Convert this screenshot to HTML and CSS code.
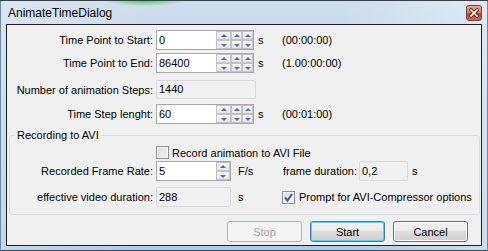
FILE: index.html
```html
<!DOCTYPE html>
<html lang="en">

<head>
    <meta charset="UTF-8">
    <title>AnimateTimeDialog</title>
    <link rel="stylesheet" href="styles.css">
</head>

<body>
    <div class="window">
        <div class="titlebar">
            <span class="title">AnimateTimeDialog</span>
            <span class="close">
                <svg width="14" height="14" viewBox="0 0 14 14">
                    <path d="M4 4 L10 10 M10 4 L4 10" stroke="#4a2418" stroke-width="3.2" stroke-linecap="square" />
                    <path d="M4 4 L10 10 M10 4 L4 10" stroke="#fff" stroke-width="1.6" stroke-linecap="square" />
                </svg>
            </span>
        </div>

        <div class="client">
            <div class="row row1">
                <span class="lbl">Time Point to Start:</span>
                <div class="field spinbox wide">
                    <span class="val">0</span>
                    <div class="spin s1"><i class="up"></i><i class="down"></i></div>
                    <div class="spin s2"><i class="up"></i><i class="down"></i></div>
                    <div class="spin s3"><i class="up"></i><i class="down"></i></div>
                </div>
                <span class="unit">s</span>
                <span class="time">(00:00:00)</span>
            </div>

            <div class="row row2">
                <span class="lbl">Time Point to End:</span>
                <div class="field spinbox wide">
                    <span class="val">86400</span>
                    <div class="spin s1"><i class="up"></i><i class="down"></i></div>
                    <div class="spin s2"><i class="up"></i><i class="down"></i></div>
                    <div class="spin s3"><i class="up"></i><i class="down"></i></div>
                </div>
                <span class="unit">s</span>
                <span class="time">(1.00:00:00)</span>
            </div>

            <div class="row row3">
                <span class="lbl">Number of animation Steps:</span>
                <div class="field readonly steps"><span class="val">1440</span></div>
            </div>

            <div class="row row4">
                <span class="lbl">Time Step lenght:</span>
                <div class="field spinbox wide">
                    <span class="val">60</span>
                    <div class="spin s1"><i class="up"></i><i class="down"></i></div>
                    <div class="spin s2"><i class="up"></i><i class="down"></i></div>
                    <div class="spin s3"><i class="up"></i><i class="down"></i></div>
                </div>
                <span class="unit">s</span>
                <span class="time">(00:01:00)</span>
            </div>

            <div class="group">
                <span class="legend">Recording to AVI</span>

                <div class="grow check-row">
                    <span class="check"></span>
                    <span class="check-text">Record animation to AVI File</span>
                </div>

                <div class="grow rate-row">
                    <span class="lbl">Recorded Frame Rate:</span>
                    <div class="field spinbox narrow">
                        <span class="val">5</span>
                        <div class="spin s1"><i class="up"></i><i class="down"></i></div>
                    </div>
                    <span class="unit2">F/s</span>
                    <span class="dur-lbl">frame duration:</span>
                    <div class="field readonly dur"><span class="val">0,2</span></div>
                    <span class="unit3">s</span>
                </div>

                <div class="grow eff-row">
                    <span class="lbl">effective video duration:</span>
                    <div class="field readonly eff"><span class="val">288</span></div>
                    <span class="unit2">s</span>
                    <span class="check checked">
                        <svg width="11" height="11" viewBox="0 0 11 11">
                            <path d="M2 5.5 L4.5 8.5 L9 2" fill="none" stroke="#3b5a9a" stroke-width="2" />
                        </svg>
                    </span>
                    <span class="check-text">Prompt for AVI-Compressor options</span>
                </div>
            </div>

            <div class="buttons">
                <button class="btn disabled">Stop</button>
                <button class="btn default">Start</button>
                <button class="btn">Cancel</button>
            </div>
        </div>
    </div>
</body>

</html>
```

FILE: styles.css
```css
body {
    margin: 0;
    font-family: "Liberation Sans", Arial, sans-serif;
    font-size: 11px;
    color: #000;
}

.window {
    width: 488px;
    height: 251px;
    box-sizing: border-box;
    border-top: 1px solid #3a3f45;
    background:
        radial-gradient(ellipse 40px 5px at 145px 0px, #5fc37d 0%, rgba(95, 195, 125, 0) 100%),
        linear-gradient(90deg, rgba(255, 255, 255, 0.25) 0%, rgba(255, 255, 255, 0) 30%, rgba(255, 255, 255, 0) 70%, rgba(255, 255, 255, 0.35) 100%),
        linear-gradient(180deg, #cfdeec 0%, #bcd2e8 50%, #aecbe4 100%);
    box-shadow: inset 1px 0 0 #6d8aa6, inset -1px 0 0 #6d8aa6, inset 0 -1px 0 #2f4f64;
}

.titlebar {
    height: 23px;
    position: relative;
}

.title {
    position: absolute;
    left: 8px;
    top: 5px;
    font-size: 12px;
    line-height: 14px;
    color: #000;
}

.close {
    position: absolute;
    left: 466px;
    top: 4px;
    width: 14px;
    height: 14px;
    border: 1px solid #6a4a42;
    border-radius: 3px;
    background: linear-gradient(180deg, #e8a894 0%, #d9806a 45%, #c0432a 55%, #cf6a4a 100%);
    display: flex;
    align-items: center;
    justify-content: center;
}

.client {
    margin: 0 6px;
    height: 220px;
    border: 1px solid #1d1d1d;
    background: #f0f0f0;
    display: flex;
    flex-direction: column;
}

.row {
    display: flex;
    align-items: center;
    height: 20px;
}

.row1 {
    margin-top: 5px;
}

.row2 {
    margin-top: 3px;
}

.row3 {
    margin-top: 7px;
    height: 19px;
}

.row4 {
    margin-top: 5px;
}

.lbl {
    width: 149px;
    box-sizing: border-box;
    padding-right: 3px;
    text-align: right;
    white-space: nowrap;
}

.field {
    box-sizing: border-box;
    height: 20px;
    display: flex;
    align-items: stretch;
    background: #fff;
    border: 1px solid #a6a6a6;
}

.field .val {
    flex: 1;
    padding-left: 2px;
    line-height: 18px;
}

.wide {
    width: 98px;
}

.narrow {
    width: 75px;
}

.readonly {
    background: #f0f0f0;
    border-color: #d9d9d9;
    border-radius: 2px;
}

.steps {
    width: 100px;
    height: 19px;
}

.steps .val {
    line-height: 17px;
}

.dur {
    width: 49px;
}

.eff {
    width: 75px;
}

.spin {
    display: flex;
    flex-direction: column;
}

.s1 {
    width: 15px;
}

.narrow .s1 {
    width: 14px;
}

.s2,
.s3 {
    width: 11px;
}

.spin i {
    flex: 1;
    position: relative;
    border: 1px solid #c3c3c3;
    background: linear-gradient(180deg, #f6f6f6 0%, #e6e6e6 100%);
}

.spin i::after {
    content: "";
    position: absolute;
    left: 50%;
    top: 50%;
    margin-left: -3px;
    border-left: 3px solid transparent;
    border-right: 3px solid transparent;
}

.spin .up::after {
    margin-top: -2px;
    border-bottom: 3px solid #4e6cb0;
}

.spin .down::after {
    margin-top: -1px;
    border-top: 3px solid #4e6cb0;
}

.unit {
    margin-left: 4px;
    width: 24px;
}

.time {
    white-space: nowrap;
}

.group {
    position: relative;
    margin: 11px 0 0 2px;
    width: 471px;
    height: 80px;
    box-sizing: border-box;
    border: 1px solid #d5dfe5;
    border-radius: 3px;
    display: flex;
    flex-direction: column;
}

.legend {
    position: absolute;
    left: 5px;
    top: -7px;
    padding: 0 2px;
    line-height: 13px;
    background: #f0f0f0;
}

.grow {
    display: flex;
    align-items: center;
}

.grow .lbl {
    width: 146px;
}

.check-row {
    margin-top: 10px;
    height: 13px;
    padding-left: 146px;
}

.check {
    width: 13px;
    height: 13px;
    box-sizing: border-box;
    border: 1px solid #8e8f8f;
    background: linear-gradient(135deg, #dcdcdc 0%, #f4f4f4 100%);
    box-shadow: inset 0 0 0 1px #f4f4f4;
    display: flex;
    align-items: center;
    justify-content: center;
}

.checked {
    background: linear-gradient(135deg, #d6dde8 0%, #f6f7f9 100%);
}

.check-text {
    margin-left: 3px;
    white-space: nowrap;
}

.eff-row .check-text {
    margin-left: 4px;
}

.rate-row {
    margin-top: 2px;
    height: 20px;
}

.eff-row {
    margin-top: 6px;
    height: 20px;
}

.unit2 {
    margin-left: 7px;
    width: 44px;
}

.rate-row .unit2 {
    width: 45px;
}

.dur-lbl {
    width: 76px;
    white-space: nowrap;
}

.unit3 {
    margin-left: 4px;
}

.buttons {
    display: flex;
    justify-content: flex-end;
    gap: 8px;
    margin-top: 6px;
    padding-right: 13px;
}

.btn {
    width: 75px;
    height: 21px;
    padding: 0;
    font-family: "Liberation Sans", Arial, sans-serif;
    font-size: 11px;
    color: #000;
    border: 1px solid #707070;
    border-radius: 3px;
    background: linear-gradient(180deg, #f2f2f2 0%, #ebebeb 49%, #dddddd 50%, #cfcfcf 100%);
    box-shadow: inset 0 0 0 1px #fbfbfb;
}

.default {
    border-color: #3c7fb1;
    box-shadow: inset 0 0 0 1px #48d4f8;
}

.disabled {
    color: #a3a3a3;
    border-color: #adb2b5;
    background: #f4f4f4;
    box-shadow: none;
}
```
